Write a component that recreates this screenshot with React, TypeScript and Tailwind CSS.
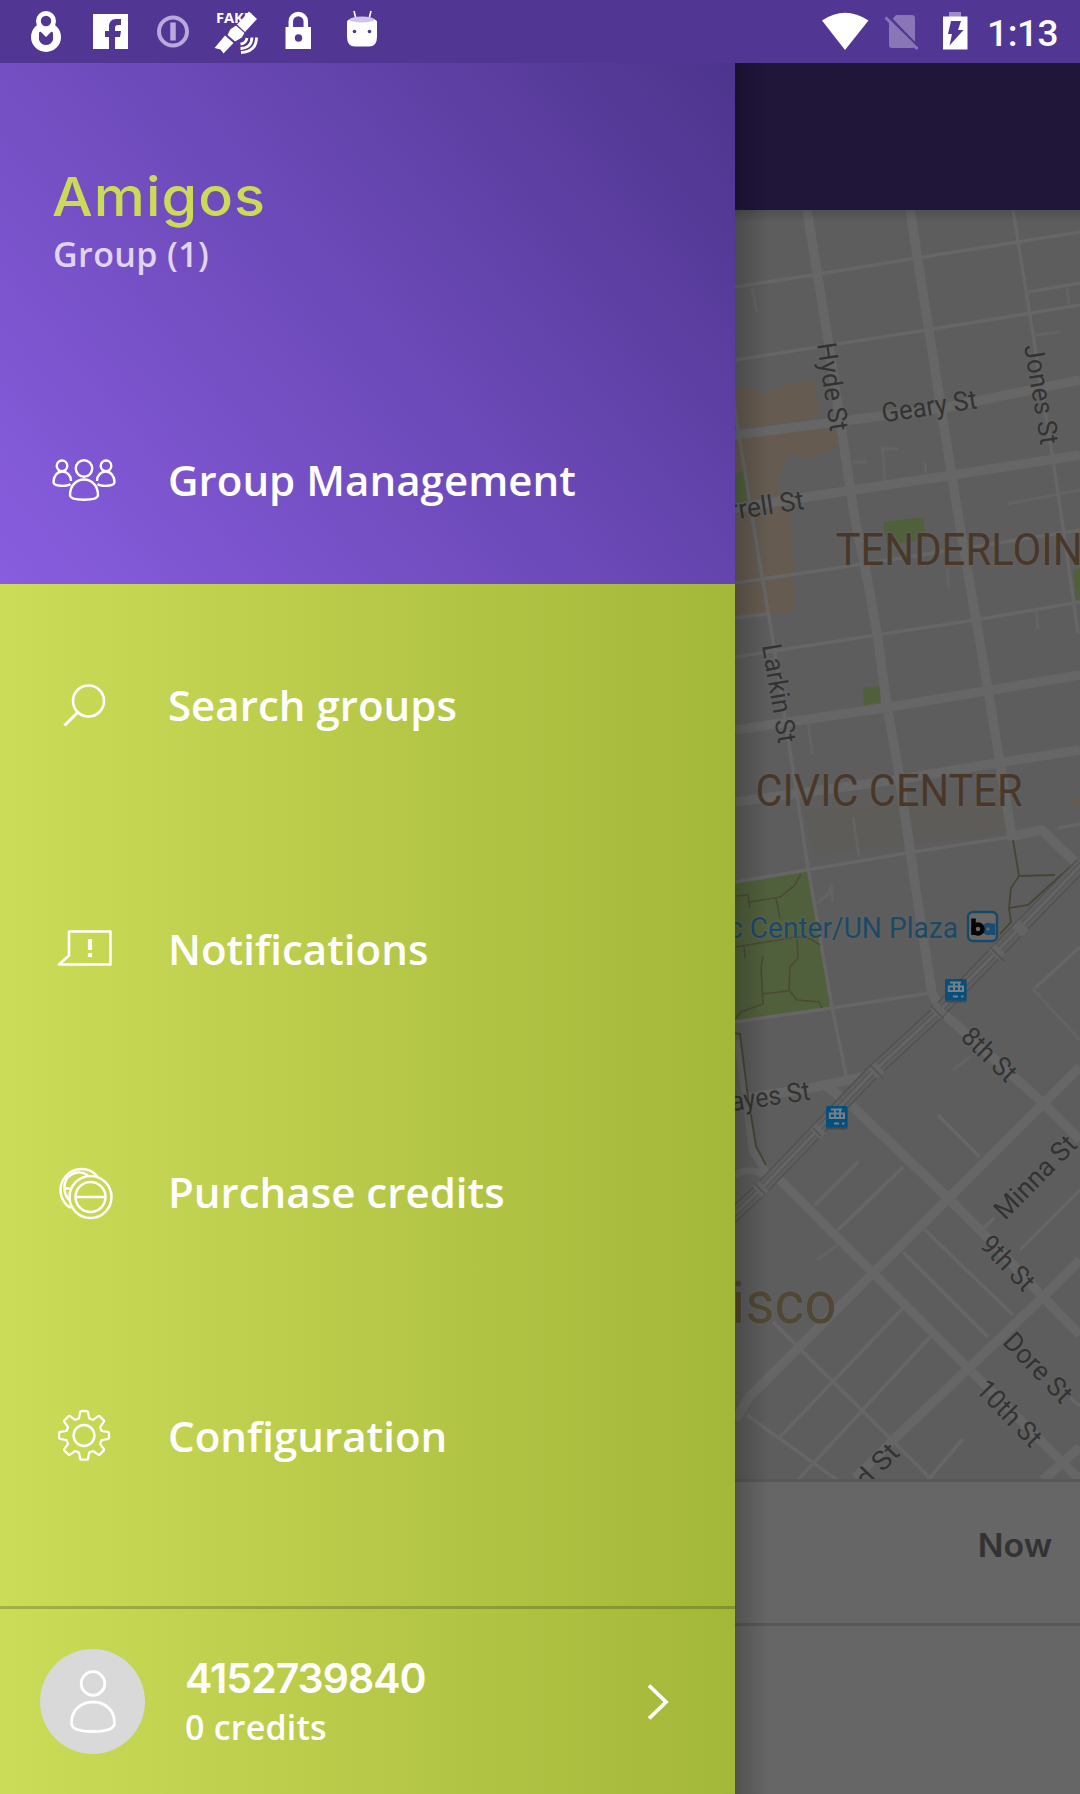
import React from "react";

const minorRoads = [
  "M735 287L813 275 917 258 1080 232",
  "M735 360L927 330 1080 305",
  "M1013 210L1035 347 1053 460 1063 527 1078 633",
  "M733 397L757 547 773 640 808 867 832 1007 847 1080",
  "M735 583L857 565 1080 530",
  "M735 657L870 636 975 620 1080 602",
  "M735 618L767 614",
  "M735 882L913 852 1010 837",
  "M1058 828L1080 824",
  "M1028 292L1080 283",
  "M735 1022L832 1008 930 993",
  "M1035 988L1080 947",
  "M815 1205L858 1162",
  "M838 1230L903 1167",
  "M938 1115L980 1157",
  "M903 1252L988 1337",
  "M925 1230L1013 1315",
  "M1020 1250L1080 1190",
  "M983 1229L994 1218",
  "M903 1308L780 1437",
  "M930 1337L798 1480",
  "M773 1322L932 1480",
  "M747 1415L837 1480",
  "M928 1480L963 1439",
  "M1070 1398L1080 1406",
];

const alleys = [
  "M752 288L757 313",
  "M1067 288L1069 304",
  "M1035 335L1060 332",
  "M853 462L867 462",
  "M882 447L885 480",
  "M882 449L898 449",
  "M925 462L926 475",
  "M1007 504L1080 490",
  "M853 817L859 857",
  "M947 568L949 588",
  "M1036 609L1038 630",
  "M808 722L812 754",
  "M953 1070L971 1056",
  "M817 1260L837 1245",
  "M1032 988L1080 1040",
  "M817 903l12-9 2-10 2 18",
];

const majorRoads = [
  "M807 210L827 333 855 520 865 567 877 633 887 707 898 767 910 850 917 897 932 993 943 1013 1043 1103 1080 1140",
  "M910 210L943 420 960 527 987 683 1012 837",
  "M735 435L943 408 1080 380",
  "M735 508L807 497 953 475 1080 455",
  "M735 730L890 707 1080 675",
  "M735 802L895 780 1003 762 1080 750",
  "M1008 837L1042 830 1078 865",
  "M735 1100L810 1088 863 1077",
  "M825 1085L853 1107 947 1197 990 1240 1043 1297 1080 1335",
  "M760 1172L780 1180 873 1273 970 1370 1063 1463 1080 1480",
  "M735 1420L750 1396 873 1273 947 1200 1040 1107 1080 1067",
  "M855 1478L893 1440 970 1367 1043 1297 1080 1260",
  "M1043 1480L1080 1447",
];

interface LabelProps {
  x: number;
  y: number;
  angle?: number;
  length: number;
  size?: number;
  color?: string;
  end?: boolean;
  children: string;
}

function MapLabel({ x, y, angle = 0, length, size = 27, color = "#333", end, children }: LabelProps) {
  return (
    <text
      transform={`translate(${x} ${y}) rotate(${angle})`}
      textLength={length}
      lengthAdjust="spacingAndGlyphs"
      textAnchor={end ? "end" : "start"}
      fontSize={size}
      fill={color}
      stroke="#646464"
      strokeWidth="2.5"
      strokeOpacity=".5"
      paintOrder="stroke"
    >
      {children}
    </text>
  );
}

function TransitStop({ x, y }: { x: number; y: number }) {
  return (
    <g transform={`translate(${x} ${y})`}>
      <rect x="0" y="1.500" width="21.500" height="22" rx="1.500" fill="#454c50" />
      <rect width="21.500" height="21.500" rx="1.500" fill="#064f7c" />
      <path d="M5 3.500h11M3.800 6.500v6.500M9 3v10M14 3v10M18 6.500v6.500M4 7.500h14M4 12h14" stroke="#75818a" strokeWidth="2" fill="none" />
      <path d="M8 17.500h5M16 17.500h2.500" stroke="#75818a" strokeWidth="2.200" />
    </g>
  );
}

function StreetMap() {
  return (
    <svg viewBox="735 210 345 1269" className="block h-[1269px] w-[345px] font-[Roboto,sans-serif]">
      <rect x="735" y="210" width="345" height="1269" fill="#5d5d5d" />
      <g fill="#655b50">
        <path d="M735 388h20l5 7 30-12 25-3 4 37-84 13z" />
        <path d="M735 440l75-12 27 2 1 17-28 11-20-3-7 12-6 16 2 10 12 17 4 101-60 9z" />
        <path d="M1072 800l8-5v15z" />
      </g>
      <path d="M805 811l200-14 5 36-195 22z" fill="#5e5c58" />
      <g fill="#51603c">
        <path d="M735 473l10-1 3 30-13 2z" />
        <path d="M883 522l40-5 3 22-39 6z" />
        <path d="M863 688l17-2v17l-16 2z" />
        <path d="M1073 570l7-1v32l-4 1z" />
        <path d="M735 883l73-12 22 137-95 14z" />
      </g>
      <g fill="none" stroke="#666">
        <g strokeWidth="3.500">{minorRoads.map((d) => <path key={d} d={d} />)}</g>
        <g strokeWidth="3" opacity=".75">{alleys.map((d) => <path key={d} d={d} />)}</g>
        <g strokeWidth="9.500" strokeLinejoin="round">{majorRoads.map((d) => <path key={d} d={d} />)}</g>
        <path d="M737 1040L746 1100 752 1150 768 1176M735 1175Q750 1166 768 1176" strokeWidth="7" />
      </g>
      <g fill="none" stroke="#4b4a36" strokeWidth="1.600">
        <path d="M801 874l-6 11-15 12-30 5M735 896l13-1 2 13M776 898l4 20M735 947l62-10 14 2 9 6M744 945l1 13M763 956l-2 12 2 36-22 8-6 7M763 994l25-3M797 937l1 21-8 9-1 23 8 10 22 2 3 6" />
      </g>
      <g fill="none" stroke="#484432" strokeWidth="1.800">
        <path d="M1013 840l6 36-8 12-2 20 19-3 42-38M1019 876l36-1M1009 908l2 14-11 12" />
        <path d="M735 1033l5 1 8 63 8 49 10 19" />
      </g>
      <g fill="none">
        <path d="M1082 864L937 1013 873 1072 760 1190 728 1220" stroke="#525252" strokeWidth="14.500" />
        <path d="M1082 864L937 1013 873 1072 760 1190 728 1220" stroke="#5f5f5f" strokeWidth="11.500" />
        <path d="M1082 864L937 1013 873 1072 760 1190 728 1220" stroke="#545454" strokeWidth="5.500" />
        <path d="M1082 864L937 1013 873 1072 760 1190 728 1220" stroke="#646464" strokeWidth="3.500" />
        <path d="M1017 932l7-7M994 955l6-6M935 1014l7-7M873 1074l7-7M815 1134l6-6M757 1192l7-6" stroke="#646464" strokeWidth="14" />
        <path d="M990 947l14 14M931 1006l13 13M870 1065l13 13M813 1128l8 8M755 1184l10 10" stroke="#525252" strokeWidth="1.500" />
      </g>

      <MapLabel x={883} y={422.500} angle={-8.500} length={96}>Geary St</MapLabel>
      <MapLabel x={805} y={509} angle={-8.500} length={75} end>rrell St</MapLabel>
      <MapLabel x={817} y={344} angle={81.500} length={89}>Hyde St</MapLabel>
      <MapLabel x={1024} y={346} angle={80.500} length={101}>Jones St</MapLabel>
      <MapLabel x={762} y={645.500} angle={80.500} length={100}>Larkin St</MapLabel>
      <MapLabel x={835.500} y={564.500} length={247} size={44} color="#49382a">TENDERLOIN</MapLabel>
      <MapLabel x={755.500} y={805.500} length={267} size={44} color="#49382a">CIVIC CENTER</MapLabel>
      <MapLabel x={958} y={938} length={230} size={30} color="#1c4965" end>c Center/UN Plaza</MapLabel>
      <MapLabel x={959.500} y={1038.500} angle={44} length={65}>8th St</MapLabel>
      <MapLabel x={811} y={1099.500} angle={-8.500} length={80} end>ayes St</MapLabel>
      <MapLabel x={1005} y={1221} angle={-45.500} length={105}>Minna St</MapLabel>
      <MapLabel x={978.500} y={1246} angle={46} length={65}>9th St</MapLabel>
      <MapLabel x={1001.500} y={1343} angle={46} length={86}>Dore St</MapLabel>
      <MapLabel x={974.500} y={1390.500} angle={46} length={81}>10th St</MapLabel>
      <MapLabel x={901} y={1454} angle={-46} length={50} end>d St</MapLabel>
      <MapLabel x={731.500} y={1323} length={105} size={60} color="#504834">isco</MapLabel>

      <rect x="968" y="912" width="29" height="29" rx="5" fill="#686868" stroke="#174a69" strokeWidth="2.400" />
      <g fill="none" strokeWidth="4.500">
        <circle cx="988" cy="929" r="3.900" stroke="#1a4c70" />
        <path d="M993 923.500v11.500" stroke="#1a4c70" />
        <circle cx="978" cy="929" r="4.500" stroke="#050505" />
        <path d="M973.500 918.500v16.500" stroke="#050505" />
      </g>
      <TransitStop x={945} y={979} />
      <TransitStop x={826} y={1106} />
    </svg>
  );
}

function LeftStatusIcons() {
  return (
    <svg viewBox="0 0 400 63" className="h-[63px] w-[400px]" fill="none">
      <circle cx="46" cy="37" r="15" fill="#fff" />
      <circle cx="46" cy="21" r="7.600" fill="#513694" stroke="#fff" strokeWidth="4.800" />
      <path d="M39 40v-6.500q0-2.500 2-1.500l5 5 5-5q2-1 2 1.500V40q-2 5-7 5t-7-5z" fill="#513694" />
      <path d="M93 14h35v35h-13V37h5l1-6h-6v-3q0-3 3-3h3v-6h-5q-7 0-7 8v4h-4v6h4v12H93z" fill="#fff" />
      <g stroke="#baa9dd">
        <circle cx="173" cy="31.500" r="14" strokeWidth="4" />
        <path d="M173 22.500v18" strokeWidth="5.500" />
      </g>
      <text x="216" y="23" fill="#fff" fontSize="13.500" fontWeight="700" textLength="36" lengthAdjust="spacingAndGlyphs" fontFamily="Open Sans, sans-serif">FAKE</text>
      <path d="M249 11.500l8 7.500-12 13-8-7.500zM225 35.500l8.500 7.500-10 10.500-3-4-6-1.500z" fill="#fff" />
      <path d="M236 25l9 8-3 5-7 4-8-7 3-6z" fill="#fff" stroke="#513694" strokeWidth="1" />
      <path d="M247 38q-1 5.500-6.500 6M252 37.500q-.500 10.500-11.500 11M256.500 37.500q0 14-15.500 15" stroke="#fff" strokeWidth="2.800" />
      <path d="M285.500 27h25.500v22h-25.500z" fill="#fff" />
      <path d="M290.800 28v-6.500a7.500 7.500 0 0 1 15 0V28" stroke="#fff" strokeWidth="4.500" />
      <circle cx="298.500" cy="38" r="3.700" fill="#513694" />
      <path d="M354 11l2 8M371 11l-2 8" stroke="#fff" strokeWidth="1.600" />
      <path d="M347 22q0-4 15-4t15 4v15q0 9.500-8 9.500h-14q-8 0-8-9.500z" fill="#fff" />
      <ellipse cx="362" cy="19.500" rx="12.500" ry="3" fill="#cfc5e6" />
      <circle cx="354.500" cy="31.500" r="1.800" fill="#513694" />
      <circle cx="369.500" cy="31.500" r="1.800" fill="#513694" />
    </svg>
  );
}

function RightStatusIcons() {
  return (
    <svg viewBox="822 0 150 63" className="h-[63px] w-[150px]" fill="none">
      <path d="M822 20.500q23-15.500 46.500 0L845 50z" fill="#fff" />
      <path d="M896 15h16q3 0 3 3v27q0 3-3 3h-20q-3 0-3-3V23z" fill="#8976b7" />
      <path d="M888 16l30 31" stroke="#513694" strokeWidth="3" />
      <path d="M885.500 17.500l32 31.500" stroke="#8976b7" strokeWidth="3" />
      <path d="M949 12h12v5h-12z" fill="#9d8dc6" />
      <path d="M943 16.500h24.500v33H943z" fill="#fff" />
      <path d="M951 21h10l-3 9h5.500l-14 15.500 2.500-11.500h-4z" fill="#513694" />
    </svg>
  );
}

function GroupIcon() {
  return (
    <svg viewBox="0 0 64 42" className="h-[42px] w-[64px] overflow-visible" fill="none" stroke="#fff" strokeWidth="2.400">
      <circle cx="32" cy="9.500" r="8.200" />
      <path d="M18 36c0-9 6-15.500 14-15.500S46 27 46 36c0 3-5 4.700-14 4.700S18 39 18 36z" />
      <circle cx="10" cy="6.800" r="5.300" />
      <path d="M18.500 25c-3 2.500-17 3-17-2 0-6 4-10.500 8.500-10.500 5 0 9 4 9 9.500" />
      <circle cx="54" cy="6.800" r="5.300" />
      <path d="M45.500 25c3 2.500 17 3 17-2 0-6-4-10.500-8.500-10.500-5 0-9 4-9 9.500" />
    </svg>
  );
}

function SearchIcon() {
  return (
    <svg viewBox="0 0 64 50" className="h-[50px] w-[64px]" fill="none" stroke="#fff" strokeWidth="2.600">
      <circle cx="36.500" cy="20" r="15.500" />
      <path d="M25.500 31.500L12.500 44.500" strokeWidth="3" />
    </svg>
  );
}

function NotificationIcon() {
  return (
    <svg viewBox="0 0 64 50" className="h-[50px] w-[64px]" fill="none" stroke="#fff" strokeWidth="2.600" strokeLinejoin="round">
      <path d="M17 7.500h41.500v33H7l10-9z" />
      <path d="M38 15v11M38 29v4" strokeWidth="4.200" />
    </svg>
  );
}

function CoinsIcon() {
  return (
    <svg viewBox="0 0 64 54" className="h-[54px] w-[64px] overflow-visible" fill="none" stroke="#fff" strokeWidth="2.500">
      <path d="M45.500 10.500A21 21 0 1 0 18.500 42" />
      <path d="M36 9.500A14.500 14.500 0 0 0 12.500 22q0 7 4.500 12M12.500 22.500h6" />
      <circle cx="38.500" cy="31" r="21" />
      <circle cx="38.500" cy="31" r="15" />
      <path d="M23.500 31h30" />
    </svg>
  );
}

function GearIcon() {
  return (
    <svg viewBox="0 0 64 54" className="h-[54px] w-[64px]" fill="none" stroke="#fff" strokeWidth="2.500" strokeLinejoin="round">
      <path d="M27.500 3.500q.300-1 1.500-1h6q1.200 0 1.500 1l1.200 7 4.300 1.800 5.800-4.200q1-.600 1.800.200l4.500 4.500q.800.800.100 1.700L50 20.300l1.800 4.400 6.900 1.100q1.300.200 1.300 1.500v5q0 1.200-1.300 1.400l-6.900 1.200-1.800 4.300 4.200 5.800q.600 1-.200 1.800l-4.400 4.400q-.800.700-1.700.100L42 47.200 37.700 49l-1.200 6.800q-.300 1.200-1.500 1.200h-6q-1.200 0-1.500-1.200L26.300 49 22 47.200l-5.900 4.100q-.900.600-1.700-.100L10 46.800q-.800-.800-.200-1.800l4.200-5.800-1.800-4.300-6.900-1.200Q4 33.500 4 32.300v-5q0-1.300 1.300-1.500l6.900-1.100 1.800-4.400-4.200-5.800q-.700-.9.100-1.700L14.400 8.300q.8-.8 1.800-.2l5.800 4.200 4.300-1.800z" transform="translate(3.600 0) scale(.89)" />
      <circle cx="32" cy="26.500" r="10.400" />
    </svg>
  );
}

function MenuItem({ icon, children }: { icon: React.ReactNode; children: string }) {
  return (
    <li className="flex h-[243.500px] items-center gap-[52px] pl-[52px]">
      {icon}
      <span className="pb-px text-[42px] leading-none font-semibold tracking-[0.03px] text-white">{children}</span>
    </li>
  );
}

export default function App() {
  return (
    <div className="flex h-[1794px] w-[1080px] flex-col overflow-hidden bg-[#666] font-['Open_Sans',sans-serif]">
      <header className="flex h-[63px] shrink-0 items-center bg-[#513694]">
        <LeftStatusIcons />
        <div className="ml-auto flex items-center pr-[21px]">
          <RightStatusIcons />
          <span className="ml-[15px] w-[72px] pt-[3px] font-[Roboto,sans-serif] text-[37px] leading-none font-medium tracking-[-0.4px] whitespace-nowrap text-white">1:13</span>
        </div>
      </header>
      <div className="flex min-h-0 flex-1">
        <aside className="flex w-[735px] shrink-0 flex-col">
          <section className="flex h-[521px] flex-col bg-[linear-gradient(50deg,#885ddf,#6b49b7_52%,#4d348c)]">
            <div className="h-[357px] pt-[100px] pl-[53px]">
              <h1 className="h-[68px] w-fit origin-left translate-x-[-1px] scale-x-[1.065] font-[Inter,sans-serif] text-[54px] leading-[68px] font-medium tracking-[1px] whitespace-nowrap text-[#cbdb57]">Amigos</h1>
              <p className="mt-[3px] text-[34px] leading-[40px] font-semibold tracking-[0.4px] text-[#e0d5f4]">Group (1)</p>
            </div>
            <div className="flex h-[120px] items-center gap-[52px] pl-[52px]">
              <GroupIcon />
              <span className="text-[42px] leading-none font-semibold tracking-[0.05px] text-white">Group Management</span>
            </div>
          </section>
          <section className="flex flex-1 flex-col bg-[linear-gradient(90deg,#cbdc58,#b8c949_50%,#a3b738)]">
            <ul className="h-[1022px]">
              <MenuItem icon={<SearchIcon />}>Search groups</MenuItem>
              <MenuItem icon={<NotificationIcon />}>Notifications</MenuItem>
              <MenuItem icon={<CoinsIcon />}>Purchase credits</MenuItem>
              <MenuItem icon={<GearIcon />}>Configuration</MenuItem>
            </ul>
            <div className="flex flex-1 items-center border-t-[3px] border-black/20 pr-[65px] pl-[40px]">
              <div className="flex size-[105px] items-center justify-center rounded-full bg-[#d9d9d9]">
                <svg viewBox="0 0 50 66" className="h-[66px] w-[50px]" fill="none" stroke="#fff" strokeWidth="2.800">
                  <circle cx="25" cy="14.500" r="11.800" />
                  <path d="M3.500 54c0-13 9.500-21 21.500-21s21.500 8 21.500 21c0 6-8 8.500-21.500 8.500S3.500 60 3.500 54z" />
                </svg>
              </div>
              <div className="ml-[40px] pb-px text-white">
                <p className="font-[Inter,sans-serif] text-[41px] leading-[52px] font-semibold tracking-[-1px] whitespace-nowrap">4152739840</p>
                <p className="text-[34px] leading-[46px] font-semibold tracking-[0.2px]">0 credits</p>
              </div>
              <svg viewBox="0 0 24 38" className="ml-auto h-[38px] w-[24px]" fill="none" stroke="#fff" strokeWidth="3.800">
                <path d="M3 2.500l17 16.500L3 35.500" />
              </svg>
            </div>
          </section>
        </aside>
        <main className="relative flex w-[345px] flex-col overflow-hidden">
          <div className="h-[147px] bg-[#1f163a]" />
          <StreetMap />
          <div className="flex h-[147px] items-center justify-end border-y-[3px] border-[#585858] pr-[28px] pb-[14px]">
            <span className="origin-right scale-x-[1.06] font-[Inter,sans-serif] text-[32px] leading-none font-semibold text-[#333]">Now</span>
          </div>
          <div className="absolute inset-x-0 top-[147px] h-[12px] bg-linear-to-b from-black/15 to-transparent" />
          <div className="absolute inset-y-0 left-0 w-[34px] bg-linear-to-r from-black/20 to-transparent" />
        </main>
      </div>
    </div>
  );
}
